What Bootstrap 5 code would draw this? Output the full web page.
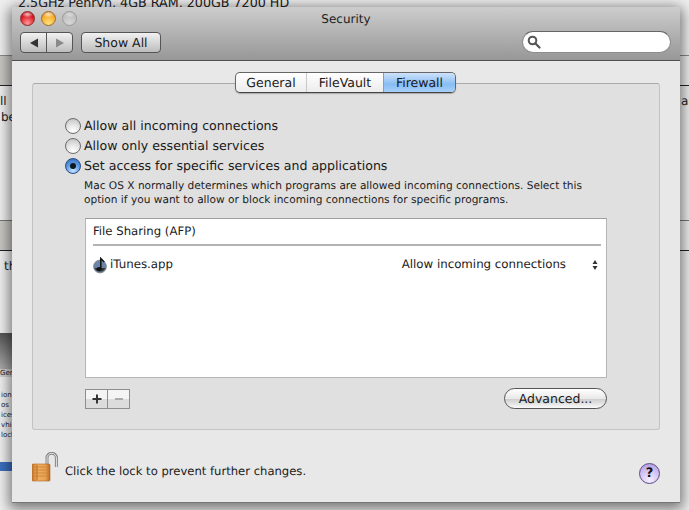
<!DOCTYPE html>
<html lang="en">
<head>
<meta charset="utf-8">
<title>Security</title>
<link href="https://cdn.jsdelivr.net/npm/bootstrap@5.3.0/dist/css/bootstrap.min.css" rel="stylesheet">
<style>
html,body{margin:0;width:689px;height:510px;overflow:hidden;background:#efefef;font-family:"DejaVu Sans","Liberation Sans",sans-serif;color:#1a1a1a;font-size:12px;text-rendering:geometricPrecision}
.desk{position:relative;width:689px;height:510px;overflow:hidden}
.bg-frag{position:absolute;white-space:nowrap}
.bg-top{left:18px;top:-7px;font-size:12.7px;color:#222}
.bg-txt{font-size:12px;color:#222}
.bg-band{position:absolute;left:0;width:12px}
.bg-line{position:absolute;left:0;width:689px;height:1px;background:#555}
.macwin{position:absolute;left:12px;top:7px;width:668px;height:496px;background:#e8e8e8;border-radius:4px 4px 0 0;box-shadow:0 3px 13px 3px rgba(0,0,0,.5);border-bottom:1px solid #777}
.titlebar{height:54px;background:linear-gradient(#cdcdcd,#979797);border-bottom:1px solid #4f4f4f;border-radius:4px 4px 0 0;position:relative;padding:0 8px}
.wintitle{position:absolute;left:0;right:0;top:3px;text-align:center;font-size:12px;color:#222}
.lights{height:22px;gap:6px}
.lightdot{width:15px;height:15px;border-radius:50%;border:1px solid #7a7a7a}
.dot-r{background:radial-gradient(ellipse 45% 25% at 50% 18%,rgba(255,255,255,.75),transparent),radial-gradient(circle at 50% 85%,#ff9a9a,#dc1a22 60%,#a01016);border-color:#8c2c2c}
.dot-y{background:radial-gradient(ellipse 45% 25% at 50% 18%,rgba(255,255,255,.75),transparent),radial-gradient(circle at 50% 85%,#ffe27a,#f7ab2c 60%,#cf801c);border-color:#97703a}
.dot-g{background:radial-gradient(ellipse 45% 25% at 50% 18%,rgba(255,255,255,.45),transparent),radial-gradient(circle at 50% 85%,#d6d6d6,#b4b4b4);border-color:#9a9a9a}
.toolrow{margin-top:3px}
.tbtn{height:21px;border:1px solid #555;border-radius:4px;background:linear-gradient(#f1f1f1,#bdbdbd);font-size:12.5px;color:#1a1a1a;padding:0;line-height:19px}
.navseg{width:53px;margin-right:8px}
.navseg span{flex:1;display:flex;align-items:center;justify-content:center;height:100%}
.navseg span+span{border-left:1px solid #555}
.showall{width:80px;text-align:center}
.searchbox{position:absolute;right:9px;top:24px;width:149px;height:22px;background:#fff;border-radius:11px;border:1px solid #8d8d8d;border-top-color:#666;padding-left:4px}
.bodyarea{position:relative;padding:22px 20px 0 20px}
.innerpanel{height:347px;background:#e0e0e0;border:1px solid #c3c3c3;border-top-color:#a9a9a9;border-radius:3px;padding:32px 31px 0 32px}
.segtabs{position:absolute;left:223px;top:11px;height:21px;width:221px;border:1px solid #666;border-bottom-color:#444;border-radius:5px;background:linear-gradient(#fff,#ececec);font-size:12.5px;overflow:hidden;box-shadow:0 1px 1px rgba(0,0,0,.25)}
.segtab{display:flex;align-items:center;justify-content:center;height:100%;color:#1a1a1a;padding-top:1px}
.tab-a{width:71px;border-right:1px solid #c8c8c8}
.tab-b{width:76px}
.tab-c{flex:1;background:linear-gradient(#cfe2fb,#88bdf4 60%,#a8d0f8);border-left:1px solid #7b9fd0}
.optrow{height:20px;gap:3px;font-size:12.6px;color:#1a1a1a;white-space:nowrap}
.radiodot{width:16px;height:16px;border-radius:50%;border:1px solid #6c6c6c;background:radial-gradient(circle at 50% 85%,#fff,#e6e6e6 45%,#bcbcbc);flex:none;display:flex;align-items:center;justify-content:center}
.radio-on{background:radial-gradient(circle at 50% 85%,#c8e2ff,#5f9fe6 50%,#2a63b8);border-color:#2a4a80}
.radio-on::after{content:"";width:6px;height:6px;border-radius:50%;background:#101820}
.optnote{margin:3px 0 0 19px;font-size:10.6px;line-height:14px;color:#222;white-space:nowrap}
.svcbox{margin:11px 0 0 20px;width:522px;height:160px;background:#fff;border:1px solid #b5b5b5;border-top-color:#9f9f9f;padding:0 5px 0 7px}
.svchead{height:27px;border-bottom:2px solid #b4b4b4;font-size:11.7px;padding-top:4px;line-height:17px}
.svcrow{height:38px;font-size:11.8px}
.svcicon{margin-right:2px;flex:none}
.svcrule{font-size:11.8px;margin-left:auto}
.updown{width:17px;margin-left:18px;flex:none}
.bottomctl{margin:10px 0 0 20px;width:522px}
.pmgroup{width:45px;height:20px;border:1px solid #8e8e8e;background:linear-gradient(#f4f4f4 50%,#dcdcdc 50%)}
.pmgroup span{flex:1;display:flex;align-items:center;justify-content:center}
.pmgroup span+span{border-left:1px solid #8e8e8e}
.advbtn{margin-left:auto;width:103px;height:21px;border:1px solid #555;border-radius:11px;background:linear-gradient(#fff 0,#e9e9e9 50%,#cfcfcf 55%,#fafafa);font-size:12.5px;line-height:19px;text-align:center;color:#1a1a1a}
.lockrow{padding:19px 0 0 0;height:52px;gap:7px;font-size:11.6px;white-space:nowrap;align-items:flex-end}
.locktext{line-height:16px;margin-bottom:3px}
.helpbtn{position:absolute;left:627px;top:402px;width:21px;height:21px;border-radius:50%;border:1px solid #5c4a86;background:radial-gradient(circle at 50% 85%,#f5efff,#cdbcf0 60%,#a48fd8);font-weight:700;font-size:13px;line-height:19px;text-align:center;color:#111}
</style>
</head>
<body>
<div class="desk">
  <div class="bg-frag bg-top">2.5GHz Penryn, 4GB RAM, 200GB 7200 HD</div>
  <div class="bg-band" style="top:55px;height:30px;background:#c9c7c4"></div>
  <div class="bg-line" style="top:55px;background:#8a8a8a"></div>
  <div class="bg-line" style="top:85px;background:#222"></div>
  <div class="bg-frag bg-txt" style="left:0;top:92px">ll</div>
  <div class="bg-frag bg-txt" style="left:1px;top:108px">be</div>
  <div class="bg-frag bg-txt" style="left:681px;top:92px">ar</div>
  <div class="bg-line" style="top:220px;background:#777"></div>
  <div class="bg-band" style="top:221px;height:29px;background:#c9c7c4"></div>
  <div class="bg-line" style="top:250px;background:#222"></div>
  <div class="bg-frag bg-txt" style="left:4px;top:257px">th</div>
  <div class="bg-band" style="top:333px;height:36px;background:linear-gradient(#555,#aaa)"></div>
  <div class="bg-band" style="top:369px;height:8px;background:#d0d0d0"></div>
  <div class="bg-frag" style="left:0;top:368px;font-size:7px;color:#222">Gen</div>
  <div class="bg-frag" style="left:1px;top:390px;font-size:7px;line-height:10px;color:#222">ion<br>os<br>ices<br>vhic<br>lock</div>
  <div class="bg-band" style="top:462px;height:9px;background:#3b6fc0"></div>

  <div class="macwin">
    <div class="titlebar">
      <div class="wintitle">Security</div>
      <div class="lights d-flex align-items-center">
        <div class="lightdot dot-r"></div><div class="lightdot dot-y"></div><div class="lightdot dot-g"></div>
      </div>
      <div class="toolrow d-flex">
        <div class="tbtn navseg d-flex">
          <span><svg width="10" height="10" viewBox="0 0 10 10"><path d="M1 5 9 .5v9z" fill="#333"/></svg></span>
          <span><svg width="10" height="10" viewBox="0 0 10 10"><path d="M9 5 1 .5v9z" fill="#8a8a8a"/></svg></span>
        </div>
        <div class="tbtn showall">Show All</div>
      </div>
      <div class="searchbox d-flex align-items-center">
        <svg width="14" height="14" viewBox="0 0 14 14"><circle cx="5.5" cy="5.5" r="3.8" fill="none" stroke="#555" stroke-width="2"/><path d="M8.500 8.500 12.500 12.500" stroke="#555" stroke-width="2.200" stroke-linecap="round"/></svg>
      </div>
    </div>
    <div class="bodyarea">
      <div class="segtabs d-flex">
        <div class="segtab tab-a">General</div>
        <div class="segtab tab-b">FileVault</div>
        <div class="segtab tab-c">Firewall</div>
      </div>
      <div class="innerpanel">
        <div class="optrow d-flex align-items-center"><span class="radiodot"></span>Allow all incoming connections</div>
        <div class="optrow d-flex align-items-center"><span class="radiodot"></span>Allow only essential services</div>
        <div class="optrow d-flex align-items-center"><span class="radiodot radio-on"></span>Set access for specific services and applications</div>
        <div class="optnote">Mac OS X normally determines which programs are allowed incoming connections. Select this<br>option if you want to allow or block incoming connections for specific programs.</div>
        <div class="svcbox">
          <div class="svchead">File Sharing (AFP)</div>
          <div class="svcrow d-flex align-items-center">
            <svg width="15" height="17" viewBox="0 0 15 17" class="svcicon"><circle cx="7" cy="9.500" r="6.500" fill="#6b86a6" stroke="#777" stroke-width=".6"/><path d="M1.500 11a6 6 0 0 0 11 0z" fill="#333"/><ellipse cx="6" cy="12" rx="2.500" ry="2" fill="#111"/><path d="M7.800 12V1.500l3.500 3.500" fill="none" stroke="#111" stroke-width="1.500"/></svg>
            <span>iTunes.app</span>
            <span class="svcrule">Allow incoming connections</span>
            <svg class="updown" width="17" height="10" viewBox="0 0 17 10"><path d="M11 0 13.500 4h-5zM11 10 8.500 6h5z" fill="#333"/></svg>
          </div>
        </div>
        <div class="bottomctl d-flex align-items-center">
          <div class="pmgroup d-flex">
            <span><svg width="10" height="10" viewBox="0 0 10 10"><path d="M5 .5v9M.5 5h9" stroke="#333" stroke-width="2"/></svg></span>
            <span><svg width="10" height="10" viewBox="0 0 10 10"><path d="M1 5h8" stroke="#aaa" stroke-width="2"/></svg></span>
          </div>
          <div class="advbtn">Advanced...</div>
        </div>
      </div>
      <div class="lockrow d-flex">
        <svg width="26" height="30" viewBox="0 0 26 30" class="flex-none">
          <defs><linearGradient id="lockbody" x1="0" x2="1" y1="0" y2="0"><stop offset="0" stop-color="#c9742a"/><stop offset=".3" stop-color="#f0b060"/><stop offset=".75" stop-color="#e9a050"/><stop offset="1" stop-color="#b8651f"/></linearGradient></defs>
          <path d="M15 14V6a4.700 4.700 0 0 1 9.400 0V15" fill="none" stroke="#858585" stroke-width="3"/>
          <path d="M15 14V6a4.700 4.700 0 0 1 9.400 0V15" fill="none" stroke="#e6e6e6" stroke-width="1"/>
          <rect x="0" y="12" width="18" height="17" rx="1" fill="url(#lockbody)" stroke="#a8641f" stroke-width=".6"/>
          <path d="M.5 15h17M.5 18h17M.5 21h17M.5 24h17" stroke="#c98238" stroke-width=".8"/>
          <path d="M5 13v15" stroke="#b86d28" stroke-width="1"/>
        </svg>
        <span class="locktext">Click the lock to prevent further changes.</span>
      </div>
      <div class="helpbtn">?</div>
    </div>
  </div>
</div>
</body>
</html>
